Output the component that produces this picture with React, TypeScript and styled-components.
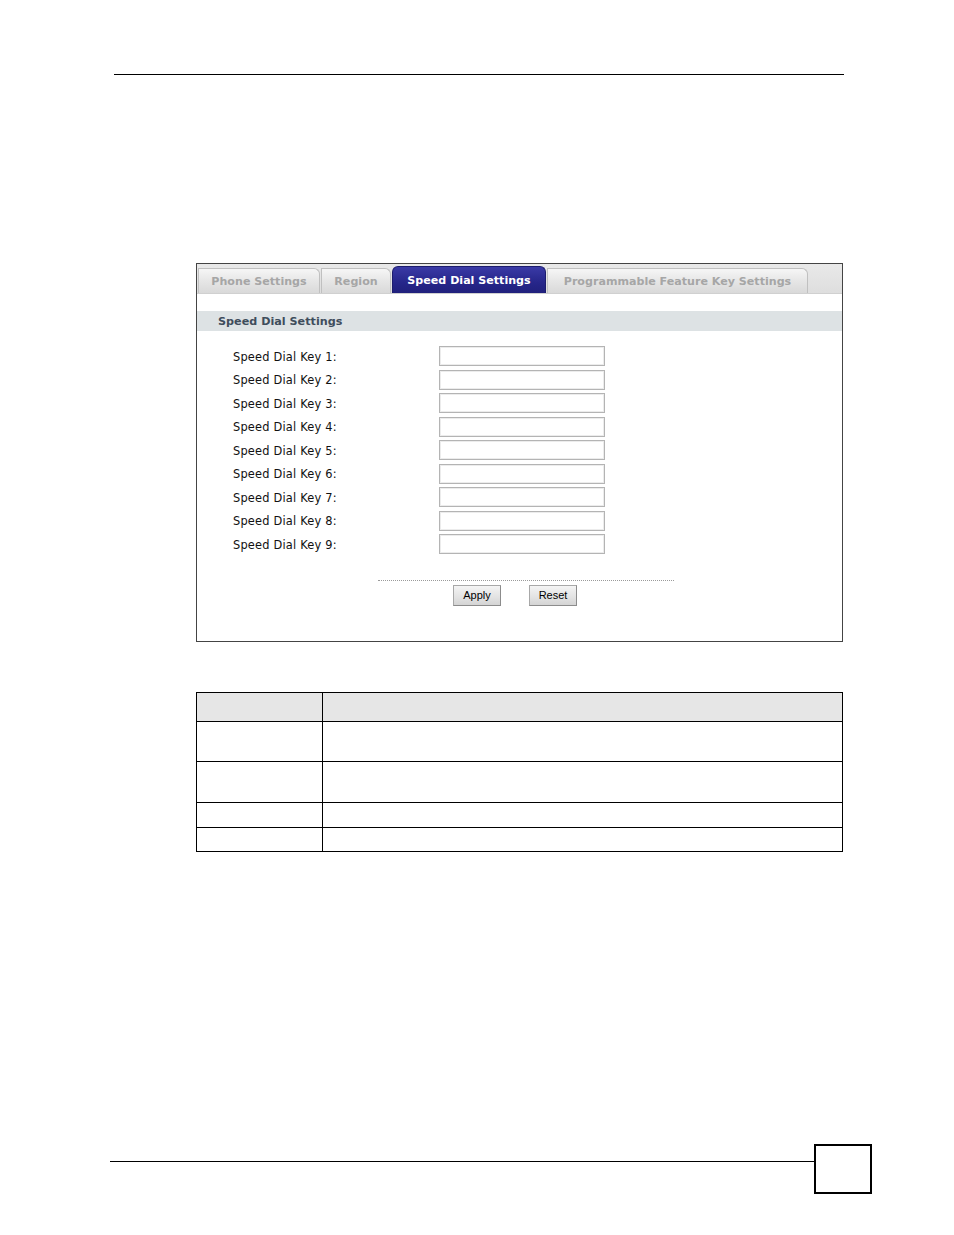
import React from "react";
import styled, { createGlobalStyle } from "styled-components";

const Global = createGlobalStyle`
  html, body { margin: 0; padding: 0; background: #fff; }
  body { font-family: "DejaVu Sans", Verdana, sans-serif; }
  * { box-sizing: border-box; }
`;

const Page = styled.div`
  width: 954px;
  height: 1235px;
  padding-top: 74px;
  background: #fff;
  overflow: hidden;
`;

const TopRule = styled.div`
  margin-left: 114px;
  width: 730px;
  height: 1px;
  background: #000;
`;

const Frame = styled.div`
  margin-top: 188px;
  margin-left: 196px;
  width: 647px;
  height: 379px;
  border: 1px solid #444;
  background: #fff;
  display: flex;
  flex-direction: column;
`;

const TabBar = styled.div`
  height: 30px;
  display: flex;
  align-items: flex-end;
  gap: 1px;
  padding-left: 1px;
  background: linear-gradient(#e9e9e9, #dedede);
  border-bottom: 1px solid #d0d0d0;
`;

const Tab = styled.div<{ $w: number; $active?: boolean }>`
  width: ${(p) => p.$w}px;
  height: ${(p) => (p.$active ? 27 : 25)}px;
  display: flex;
  align-items: center;
  justify-content: center;
  font-family: "DejaVu Sans", Verdana, sans-serif;
  font-weight: bold;
  font-size: 11.1px;
  white-space: nowrap;
  color: ${(p) => (p.$active ? "#ffffff" : "#a6a6a6")};
  background: ${(p) =>
    p.$active
      ? "linear-gradient(#3a3aa6, #26268a 60%, #20207c)"
      : "linear-gradient(#f6f6f6, #e6e6e6 50%, #d9d9d9)"};
  border: 1px solid ${(p) => (p.$active ? "#1c1c6e" : "#c0c0c0")};
  border-bottom: none;
  border-radius: ${(p) => (p.$active ? "6px 6px 0 0" : "0 6px 0 0")};
  padding-top: 1px;
`;

const SectionHeader = styled.div`
  margin-top: 17px;
  height: 20px;
  background: #dde2e4;
  padding-left: 21px;
  display: flex;
  align-items: center;
  font-family: "DejaVu Sans", Verdana, sans-serif;
  font-weight: bold;
  font-size: 11.2px;
  color: #3f4d5c;
`;

const Form = styled.div`
  margin-top: 15px;
  padding-left: 36px;
  display: grid;
  grid-template-columns: 206px 166px;
  row-gap: 3.5px;
`;

const Label = styled.label`
  height: 20px;
  display: flex;
  align-items: center;
  padding-top: 1px;
  font-family: "DejaVu Sans", Verdana, sans-serif;
  font-size: 11.4px;
  letter-spacing: 0.2px;
  color: #111;
  white-space: nowrap;
`;

const Field = styled.input`
  width: 166px;
  height: 20px;
  margin: 0;
  padding: 0 3px;
  border: 1px solid #b4b4b4;
  box-shadow: inset 0 0 0 1px #ececec;
  background: #fff;
  font-size: 11px;
  outline: none;
`;

const Dots = styled.div`
  margin-top: 26px;
  margin-left: 181px;
  width: 296px;
  border-top: 1px dotted #9a9a9a;
`;

const Buttons = styled.div`
  margin-top: 4px;
  margin-left: 256px;
  display: flex;
  gap: 28px;
`;

const Btn = styled.button`
  width: 48px;
  height: 21px;
  margin: 0;
  padding: 0 0 1px;
  font-family: "Liberation Sans", Arial, sans-serif;
  font-size: 11px;
  color: #000;
  background: linear-gradient(#f4f4f4, #e2e2e2 60%, #d4d4d4);
  border: 1px solid #a8a8a8;
  border-right-color: #8c8c8c;
  border-bottom-color: #8c8c8c;
  border-radius: 0;
`;

const Table = styled.table`
  margin-top: 50px;
  margin-left: 196px;
  width: 647px;
  border-collapse: collapse;
  table-layout: fixed;
`;

const Row = styled.tr<{ $h: number }>`
  height: ${(p) => p.$h}px;
`;

const HeadCell = styled.th<{ $w?: number }>`
  border: 1px solid #000;
  background: #e6e6e6;
  padding: 0;
  ${(p) => (p.$w ? `width: ${p.$w}px;` : "")}
`;

const Cell = styled.td`
  border: 1px solid #000;
  padding: 0;
`;

const Footer = styled.div`
  margin-top: 292px;
  display: flex;
  align-items: flex-start;
`;

const FootRule = styled.div`
  margin-left: 110px;
  margin-top: 17px;
  width: 704px;
  height: 1px;
  background: #000;
`;

const PageBox = styled.div`
  width: 58px;
  height: 50px;
  border: 2px solid #000;
`;

const tabs = [
  { label: "Phone Settings", w: 122 },
  { label: "Region", w: 70 },
  { label: "Speed Dial Settings", w: 154, active: true },
  { label: "Programmable Feature Key Settings", w: 261 },
];

const rows = [29, 40, 41, 25, 24];

export default function App() {
  return (
    <>
      <Global />
      <Page>
        <TopRule />
        <Frame>
          <TabBar>
            {tabs.map((t) => (
              <Tab key={t.label} $w={t.w} $active={t.active}>
                {t.label}
              </Tab>
            ))}
          </TabBar>
          <SectionHeader>Speed Dial Settings</SectionHeader>
          <Form>
            {Array.from({ length: 9 }, (_, i) => (
              <React.Fragment key={i}>
                <Label htmlFor={`sd${i + 1}`}>Speed Dial Key {i + 1}:</Label>
                <Field id={`sd${i + 1}`} type="text" />
              </React.Fragment>
            ))}
          </Form>
          <Dots />
          <Buttons>
            <Btn type="button">Apply</Btn>
            <Btn type="button">Reset</Btn>
          </Buttons>
        </Frame>
        <Table>
          <tbody>
            <Row $h={rows[0]}>
              <HeadCell $w={126} />
              <HeadCell />
            </Row>
            {rows.slice(1).map((h, i) => (
              <Row key={i} $h={h}>
                <Cell />
                <Cell />
              </Row>
            ))}
          </tbody>
        </Table>
        <Footer>
          <FootRule />
          <PageBox />
        </Footer>
      </Page>
    </>
  );
}
